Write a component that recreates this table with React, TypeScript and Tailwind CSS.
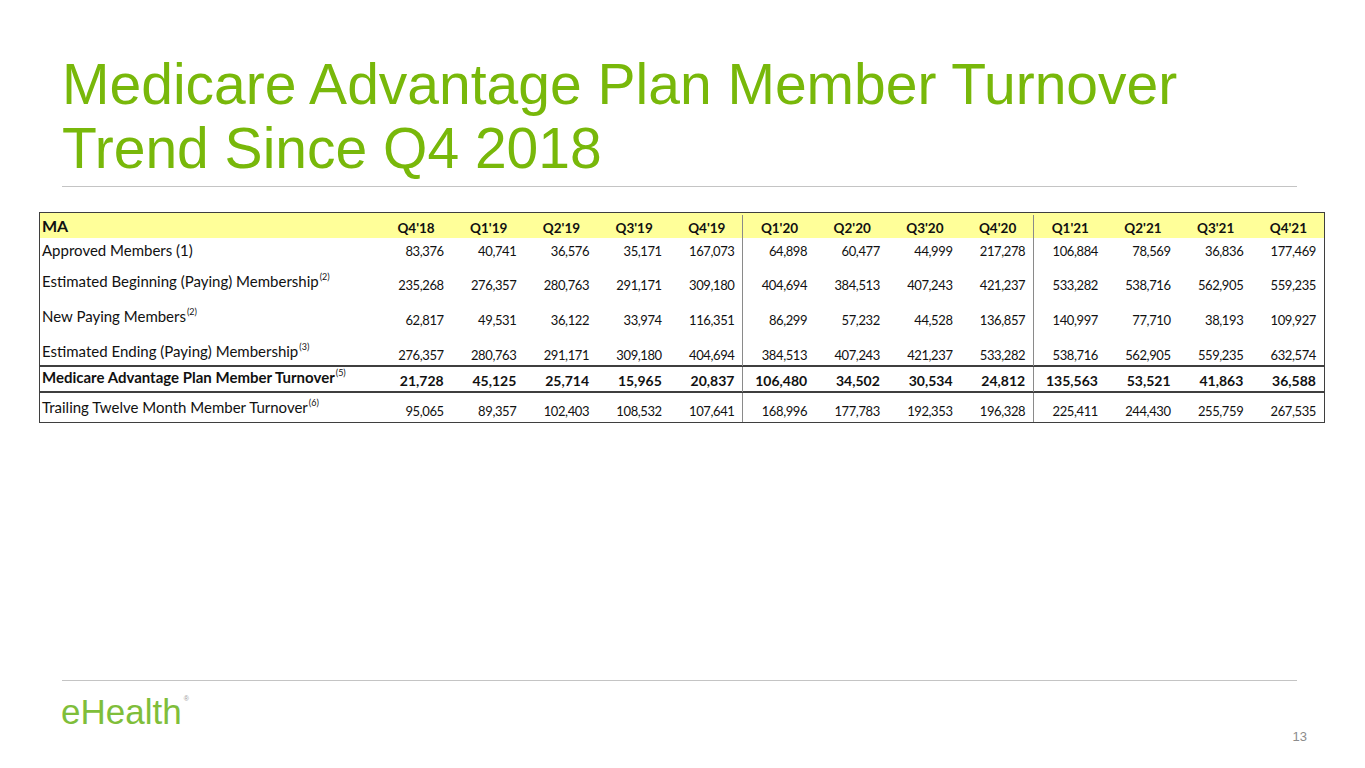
import React from 'react';

const quarters = ["Q4'18", "Q1'19", "Q2'19", "Q3'19", "Q4'19", "Q1'20", "Q2'20", "Q3'20", "Q4'20", "Q1'21", "Q2'21", "Q3'21", "Q4'21"];

type Row = {
  label: string;
  note?: string;
  values: string[];
  bold?: boolean;
  rowClass: string;
};

const rows: Row[] = [
  {
    label: 'Approved Members (1)',
    values: ['83,376', '40,741', '36,576', '35,171', '167,073', '64,898', '60,477', '44,999', '217,278', '106,884', '78,569', '36,836', '177,469'],
    rowClass: 'h-[24px] pb-[3px]',
  },
  {
    label: 'Estimated Beginning (Paying) Membership',
    note: '(2)',
    values: ['235,268', '276,357', '280,763', '291,171', '309,180', '404,694', '384,513', '407,243', '421,237', '533,282', '538,716', '562,905', '559,235'],
    rowClass: 'h-[34px] pb-[3px]',
  },
  {
    label: 'New Paying Members',
    note: '(2)',
    values: ['62,817', '49,531', '36,122', '33,974', '116,351', '86,299', '57,232', '44,528', '136,857', '140,997', '77,710', '38,193', '109,927'],
    rowClass: 'h-[35px] pb-[3px]',
  },
  {
    label: 'Estimated Ending (Paying) Membership',
    note: '(3)',
    values: ['276,357', '280,763', '291,171', '309,180', '404,694', '384,513', '407,243', '421,237', '533,282', '538,716', '562,905', '559,235', '632,574'],
    rowClass: 'h-[36px] pb-[2px] border-b-2 border-[#3f3f3f]',
  },
  {
    label: 'Medicare Advantage Plan Member Turnover',
    note: '(5)',
    bold: true,
    values: ['21,728', '45,125', '25,714', '15,965', '20,837', '106,480', '34,502', '30,534', '24,812', '135,563', '53,521', '41,863', '36,588'],
    rowClass: 'h-[26px] pb-[2px] border-b-2 border-[#3f3f3f]',
  },
  {
    label: 'Trailing Twelve Month Member Turnover',
    note: '(6)',
    values: ['95,065', '89,357', '102,403', '108,532', '107,641', '168,996', '177,783', '192,353', '196,328', '225,411', '244,430', '255,759', '267,535'],
    rowClass: 'h-[29px] pb-[3px]',
  },
];

const yearStart = (i: number) => i === 5 || i === 9;

export default function App() {
  return (
    <div className="relative w-[1365px] h-[768px] bg-white overflow-hidden flex flex-col font-['Liberation_Sans',Arial,sans-serif]">
      {/* Title */}
      <h1 className="mt-[52px] ml-[62px] text-[57px] leading-[64px] text-[#78b80a]">
        Medicare Advantage Plan Member Turnover
        <br />
        Trend Since Q4 2018
      </h1>
      <div className="mt-[6px] ml-[62px] w-[1235px] h-px bg-[#c4c4c4]" />

      {/* Table */}
      <div className="mt-[25px] ml-[39px] w-[1286px] border border-[#3f3f3f] text-[#111] font-['Lato','Liberation_Sans',sans-serif] text-[13px] leading-4">
        <div className="grid grid-cols-[339px_repeat(13,1fr)] h-[25px] bg-[#ffff99] items-end pb-[2px] font-bold">
          <div className="pl-[2px] text-[16px] leading-5">MA</div>
          {quarters.map((q, i) => (
            <div
              key={q}
              className={yearStart(i) ? 'h-full flex items-end justify-end pr-[17px] border-l border-[#8a8a8a] -mb-[2px] pb-[2px] text-[13.5px]' : 'text-right pr-[17px] text-[13.5px]'}
            >
              {q}
            </div>
          ))}
        </div>
        {rows.map(row => (
          <div key={row.label} className={`grid grid-cols-[339px_repeat(13,1fr)] ${row.rowClass} ${row.bold ? 'font-bold' : ''}`}>
            <div className="pl-[2px] self-end whitespace-nowrap text-[15px] relative -top-px">
              {row.label}
              {row.note && <span className="relative -top-[7px] text-[9px] font-normal ml-px">{row.note}</span>}
            </div>
            {row.values.map((v, i) => (
              <div
                key={i}
                className={`${yearStart(i) ? 'flex items-end justify-end border-l border-[#8a8a8a] -mb-[3px] pb-[3px]' : 'self-end text-right'} pr-2 ${row.bold ? 'text-[14px]' : 'tracking-[-0.4px]'}`}
              >
                {v}
              </div>
            ))}
          </div>
        ))}
      </div>

      {/* Footer */}
      <div className="mt-[257px] ml-[62px] w-[1235px] h-px bg-[#c4c4c4]" />
      <div className="mt-[11px] ml-[61px] w-[1246px] flex justify-between items-start">
        <div className="flex items-start">
          <span className="text-[35px] leading-[40px] text-[#7fbe3a]">eHealth</span>
          <span className="text-[7px] leading-none text-[#9a9a9a] mt-[3px] ml-[2px]">®</span>
        </div>
        <span className="mt-[37px] text-[13px] leading-4 text-[#8c8c8c]">13</span>
      </div>
    </div>
  );
}
